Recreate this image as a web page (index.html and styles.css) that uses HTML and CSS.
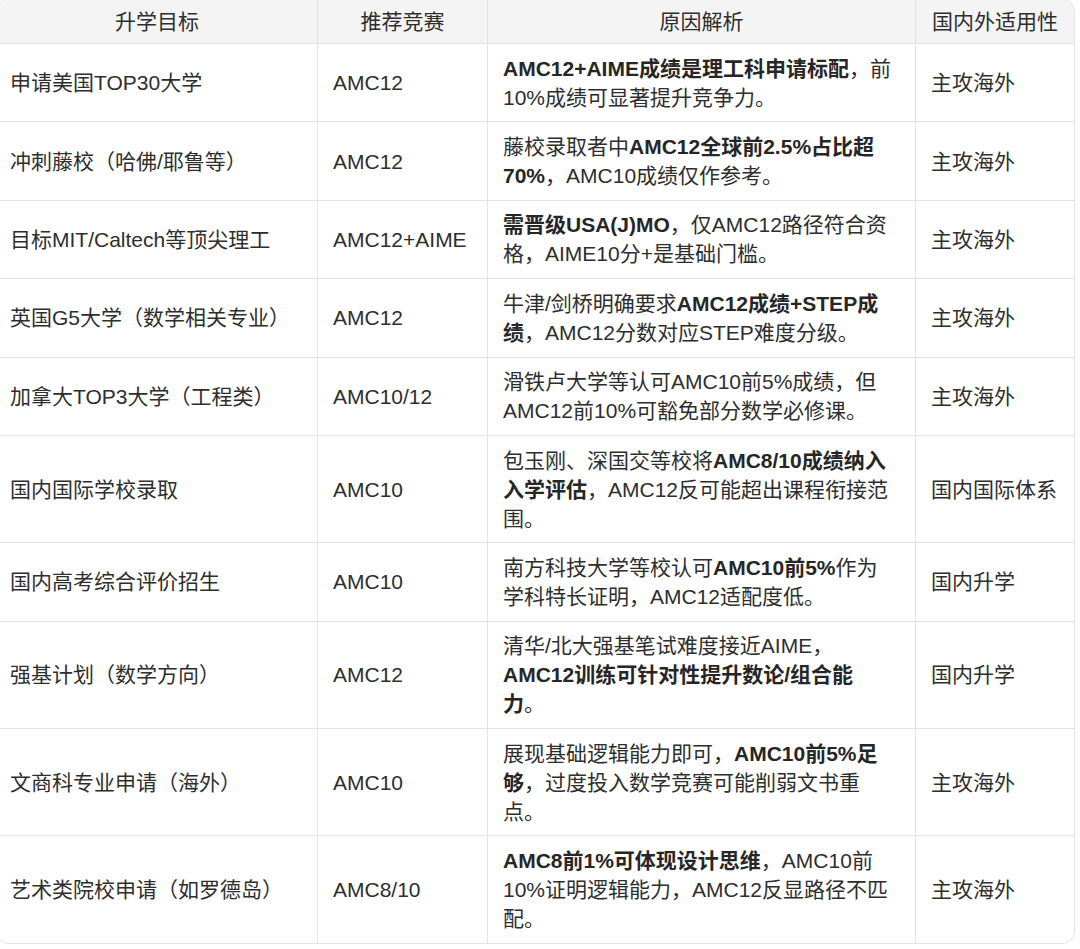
FILE: index.html
```html
<!DOCTYPE html>
<html lang="zh-CN">
<head>
<meta charset="utf-8">
<title>升学目标与推荐竞赛</title>
<link rel="stylesheet" href="styles.css">
</head>
<body>
<div class="table-wrap">
  <table class="plan">
    <colgroup>
      <col class="c1">
      <col class="c2">
      <col class="c3">
      <col class="c4">
    </colgroup>
    <thead>
      <tr>
        <th>升学目标</th>
        <th>推荐竞赛</th>
        <th>原因解析</th>
        <th>国内外适用性</th>
      </tr>
    </thead>
    <tbody>
      <tr>
        <td>申请美国TOP30大学</td>
        <td>AMC12</td>
        <td><b>AMC12+AIME成绩是理工科申请标配</b>，前<br>10%成绩可显著提升竞争力。</td>
        <td>主攻海外</td>
      </tr>
      <tr>
        <td>冲刺藤校（哈佛/耶鲁等）</td>
        <td>AMC12</td>
        <td>藤校录取者中<b>AMC12全球前2.5%占比超<br>70%</b>，AMC10成绩仅作参考。</td>
        <td>主攻海外</td>
      </tr>
      <tr>
        <td>目标MIT/Caltech等顶尖理工</td>
        <td>AMC12+AIME</td>
        <td><b>需晋级USA(J)MO</b>，仅AMC12路径符合资<br>格，AIME10分+是基础门槛。</td>
        <td>主攻海外</td>
      </tr>
      <tr>
        <td>英国G5大学（数学相关专业）</td>
        <td>AMC12</td>
        <td>牛津/剑桥明确要求<b>AMC12成绩+STEP成<br>绩</b>，AMC12分数对应STEP难度分级。</td>
        <td>主攻海外</td>
      </tr>
      <tr>
        <td>加拿大TOP3大学（工程类）</td>
        <td>AMC10/12</td>
        <td>滑铁卢大学等认可AMC10前5%成绩，但<br>AMC12前10%可豁免部分数学必修课。</td>
        <td>主攻海外</td>
      </tr>
      <tr>
        <td>国内国际学校录取</td>
        <td>AMC10</td>
        <td>包玉刚、深国交等校将<b>AMC8/10成绩纳入<br>入学评估</b>，AMC12反可能超出课程衔接范<br>围。</td>
        <td>国内国际体系</td>
      </tr>
      <tr>
        <td>国内高考综合评价招生</td>
        <td>AMC10</td>
        <td>南方科技大学等校认可<b>AMC10前5%</b>作为<br>学科特长证明，AMC12适配度低。</td>
        <td>国内升学</td>
      </tr>
      <tr>
        <td>强基计划（数学方向）</td>
        <td>AMC12</td>
        <td>清华/北大强基笔试难度接近AIME，<br><b>AMC12训练可针对性提升数论/组合能<br>力</b>。</td>
        <td>国内升学</td>
      </tr>
      <tr>
        <td>文商科专业申请（海外）</td>
        <td>AMC10</td>
        <td>展现基础逻辑能力即可，<b>AMC10前5%足<br>够</b>，过度投入数学竞赛可能削弱文书重<br>点。</td>
        <td>主攻海外</td>
      </tr>
      <tr>
        <td>艺术类院校申请（如罗德岛）</td>
        <td>AMC8/10</td>
        <td><b>AMC8前1%可体现设计思维</b>，AMC10前<br>10%证明逻辑能力，AMC12反显路径不匹<br>配。</td>
        <td>主攻海外</td>
      </tr>
    </tbody>
  </table>
</div>
</body>
</html>
```

FILE: styles.css
```css
html, body {
  margin: 0;
  padding: 0;
  background: #ffffff;
  overflow: hidden;
}

body {
  font-family: "Liberation Sans", "Noto Sans CJK SC", sans-serif;
  font-size: 21px;
  color: #2e2e2e;
}

.table-wrap {
  width: 1079px;
  margin: -1px 0 0 -4px;
  border: 1px solid #e3e3e3;
  border-radius: 12px;
  overflow: hidden;
  box-sizing: border-box;
}

.plan {
  width: 100%;
  table-layout: fixed;
  border-collapse: separate;
  border-spacing: 0;
}

.c1 { width: 321px; }
.c2 { width: 170px; }
.c3 { width: 428px; }
.c4 { width: 158px; }

.plan th,
.plan td {
  border-right: 1px solid #e3e3e3;
  border-bottom: 1px solid #e3e3e3;
  line-height: 29px;
  vertical-align: middle;
  text-align: left;
  padding: 9.7px 10px 9.7px 15px;
}

.plan td:first-child {
  padding-left: 13px;
}

.plan th:last-child,
.plan td:last-child {
  border-right: none;
}

.plan tbody tr:last-child td {
  border-bottom: none;
}

.plan th {
  background: #f4f4f4;
  font-weight: normal;
  text-align: center;
  padding: 7px 6px;
  color: #2e2e2e;
}

.plan td b {
  font-weight: 700;
  color: #262626;
}
```
